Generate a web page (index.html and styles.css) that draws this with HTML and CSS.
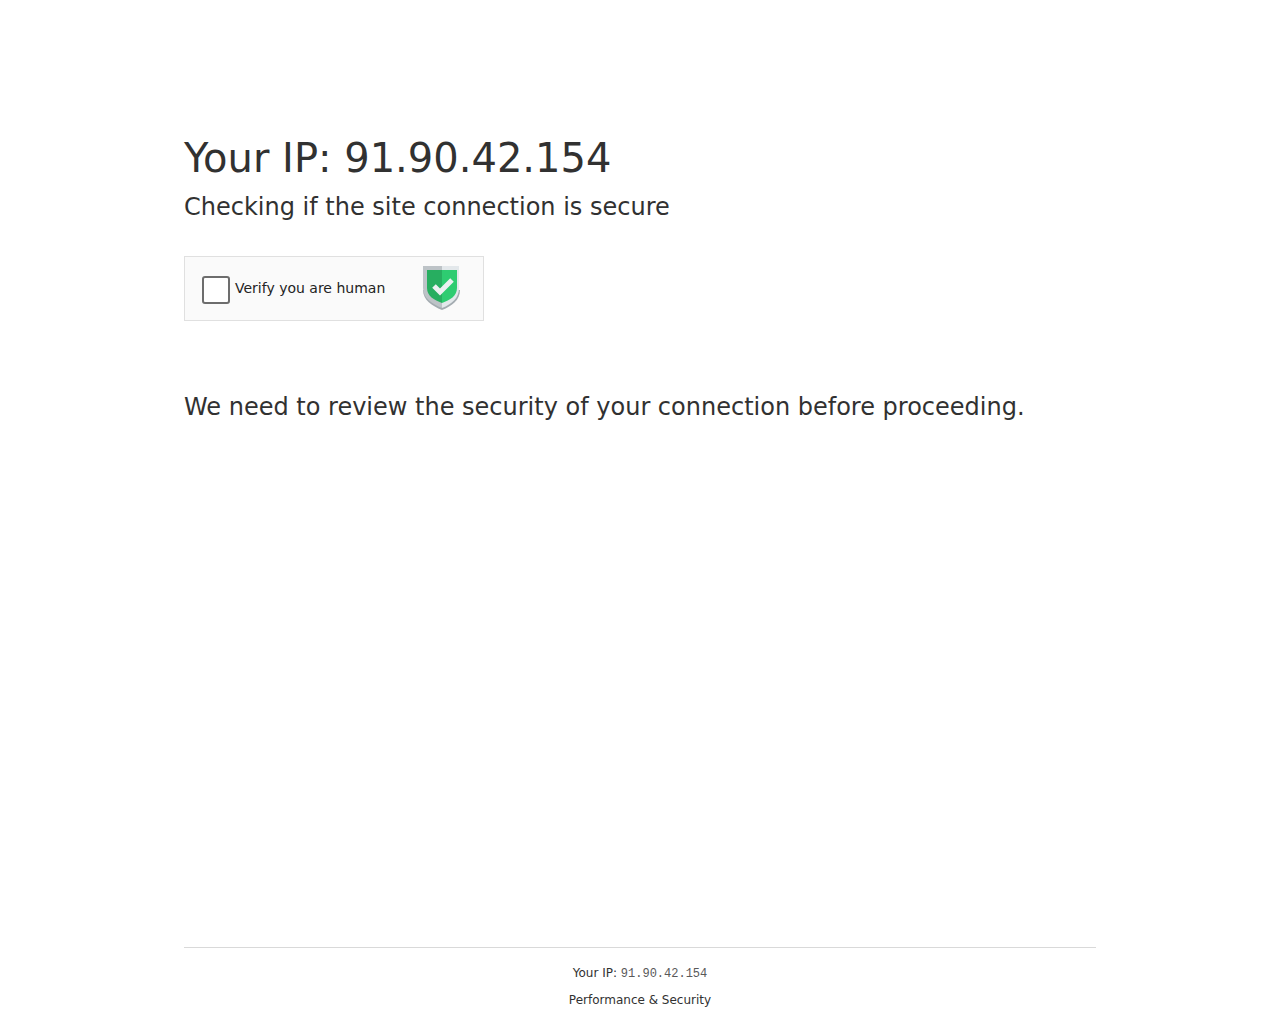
FILE: index.html
```html
<!DOCTYPE html>
<html lang="en">
<head>
    <meta charset="UTF-8">
    <meta name="viewport" content="width=device-width, initial-scale=1">
    <title>Security check</title>
    <link rel="stylesheet" href="styles.css">
</head>
<body>
    <main class="main-content">
        <h1>Your IP: 91.90.42.154</h1>
        <h2>Checking if the site connection is secure</h2>

        <div class="verify-box">
            <input type="checkbox" id="verify">
            <label for="verify">Verify you are human</label>
            <svg class="shield" viewBox="0 0 40 46" aria-hidden="true">
                <path fill="#a3abb0" d="M1 25L38 25C38 35 30 41 20 45C10 41 1 35 1 25Z"/>
                <path fill="#e3e8eb" d="M20 1H37V23C37 33 30 39 20 43Z"/>
                <path fill="#bdc3c7" d="M1 1H20V43C10 39 1 33 1 23Z"/>
                <path fill="#2ecc71" d="M20 5H35V23C35 31 28 35 20 38Z"/>
                <path fill="#27ae60" d="M5 5H20V38C12 35 5 31 5 23Z"/>
                <path fill="none" stroke="#ecf0f1" stroke-width="5" d="M12 21L18 27L30 15"/>
            </svg>
        </div>

        <p class="message">We need to review the security of your connection before proceeding.</p>
    </main>

    <footer>
        <div class="footer-inner">
            <div>Your IP: <code>91.90.42.154</code></div>
            <div>Performance &amp; Security</div>
        </div>
    </footer>
</body>
</html>
```

FILE: styles.css
```css
* {
    box-sizing: border-box;
    margin: 0;
    padding: 0;
}
body {
    display: flex;
    flex-direction: column;
    min-height: 100vh;
    background-color: #fff;
    color: #313131;
    font-family: "DejaVu Sans", sans-serif;
}
.main-content {
    flex: 1;
    width: 100%;
    max-width: 960px;
    margin: 0 auto;
    padding: 128px 24px 32px;
}
h1 {
    font-size: 40px;
    font-weight: 400;
    line-height: 60px;
}
h2,
.message {
    font-size: 24px;
    font-weight: 400;
    line-height: 38px;
}
.verify-box {
    display: flex;
    align-items: center;
    width: 300px;
    max-width: 100%;
    height: 65px;
    margin: 30px 0 67px;
    padding: 0 21px 2px 17px;
    border: 1px solid #e0e0e0;
    background-color: #fafafa;
    font-size: 14px;
}
.verify-box input {
    appearance: none;
    width: 28px;
    height: 28px;
    margin: 5px 5px 0 0;
    border: 2px solid #6d6d6d;
    border-radius: 3px;
    background-color: #fff;
    cursor: pointer;
}
.verify-box input:checked {
    background-color: #2ecc71;
}
.verify-box label {
    color: #232323;
    cursor: pointer;
}
.shield {
    width: 40px;
    height: 46px;
    margin-left: auto;
}
footer {
    width: 100%;
    max-width: 960px;
    margin: 0 auto;
    padding: 0 24px;
    font-size: 12px;
    line-height: 18px;
}
.footer-inner {
    display: flex;
    flex-direction: column;
    gap: 8px;
    padding: 16px 0 15px;
    border-top: 1px solid #d9d9d9;
    text-align: center;
}
code {
    color: #595959;
    font-family: "Liberation Mono", monospace;
    font-size: 12px;
}
```
